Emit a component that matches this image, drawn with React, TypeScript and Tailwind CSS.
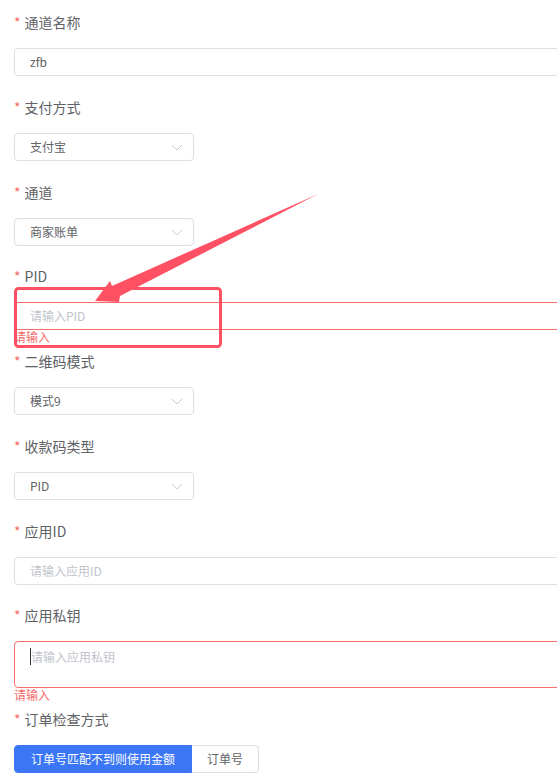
import React from "react";

const font = { fontFamily: '"Noto Sans CJK SC", "Noto Sans", sans-serif' };

function Label({ text }: { text: string }) {
  return (
    <div className="h-[22px] leading-[22px] mb-[15px] text-[14px] text-[#606266]">
      <span className="text-[#f56c6c] mr-[4px]">*</span>
      {text}
    </div>
  );
}

function TextInput({ value, placeholder, error }: { value?: string; placeholder?: string; error?: boolean }) {
  return (
    <div
      className={`w-[620px] h-[28px] rounded-[4px] border bg-white flex items-center pl-[15px] text-[12px] ${
        error ? "border-[#f56c6c]" : "border-[#dcdfe6]"
      }`}
    >
      {value ? (
        <span className="text-[#606266]">{value}</span>
      ) : (
        <span className="text-[#c0c4cc]">{placeholder}</span>
      )}
    </div>
  );
}

function Chevron() {
  return (
    <svg width="12" height="7" viewBox="0 0 12 7" fill="none">
      <path d="M1 1l5 5 5-5" stroke="#c8cbd2" strokeWidth="1" />
    </svg>
  );
}

function Select({ value }: { value: string }) {
  return (
    <div className="w-[180px] h-[28px] rounded-[4px] border border-[#dcdfe6] bg-white flex items-center justify-between pl-[15px] pr-[10px] text-[12px] text-[#606266]">
      <span>{value}</span>
      <Chevron />
    </div>
  );
}

function ErrorText() {
  return (
    <div className="absolute left-0 top-full pt-[1px] text-[12px] leading-[12px] text-[#f56c6c]">请输入</div>
  );
}

function Item({ label, tight, children }: { label: string; tight?: boolean; children: React.ReactNode }) {
  return (
    <div className={tight ? "mb-[19px]" : "mb-5"}>
      <Label text={label} />
      <div className="relative">{children}</div>
    </div>
  );
}

export default function App() {
  return (
    <div className="relative w-full h-[776px] overflow-hidden bg-white" style={font}>
      <div className="pl-[14px] pt-[11px]">
        <Item label="通道名称">
          <TextInput value="zfb" />
        </Item>
        <Item label="支付方式">
          <Select value="支付宝" />
        </Item>
        <Item label="通道" tight>
          <Select value="商家账单" />
        </Item>
        <Item label="PID">
          <TextInput placeholder="请输入PID" error />
          <ErrorText />
        </Item>
        <Item label="二维码模式">
          <Select value="模式9" />
        </Item>
        <Item label="收款码类型">
          <Select value="PID" />
        </Item>
        <Item label="应用ID" tight>
          <TextInput placeholder="请输入应用ID" />
        </Item>
        <Item label="应用私钥">
          <div className="w-[620px] h-[47px] rounded-[4px] border border-[#f56c6c] bg-white pl-[15px] pt-[5px] text-[12px] leading-[20px]">
            <span className="border-l border-[#303133] text-[#c0c4cc]">请输入应用私钥</span>
          </div>
          <ErrorText />
        </Item>
        <Item label="订单检查方式">
          <div className="flex text-[12px]">
            <div className="h-[28px] px-4 flex items-center rounded-l-[4px] bg-[#3a76f6] text-white border border-[#3a76f6]">
              订单号匹配不到则使用金额
            </div>
            <div className="h-[28px] px-[15px] flex items-center rounded-r-[4px] bg-white text-[#606266] border border-l-0 border-[#dcdfe6]">
              订单号
            </div>
          </div>
        </Item>
      </div>

      <svg className="absolute inset-0 pointer-events-none" width="557" height="776" viewBox="0 0 557 776">
        <rect x="15.5" y="288.5" width="205" height="58" rx="3" fill="none" stroke="#ff5064" strokeWidth="3" />
        <polygon
          points="318,194 112,286 110,281 95,301 119,302 120,296"
          fill="#ff5064"
        />
      </svg>
    </div>
  );
}
